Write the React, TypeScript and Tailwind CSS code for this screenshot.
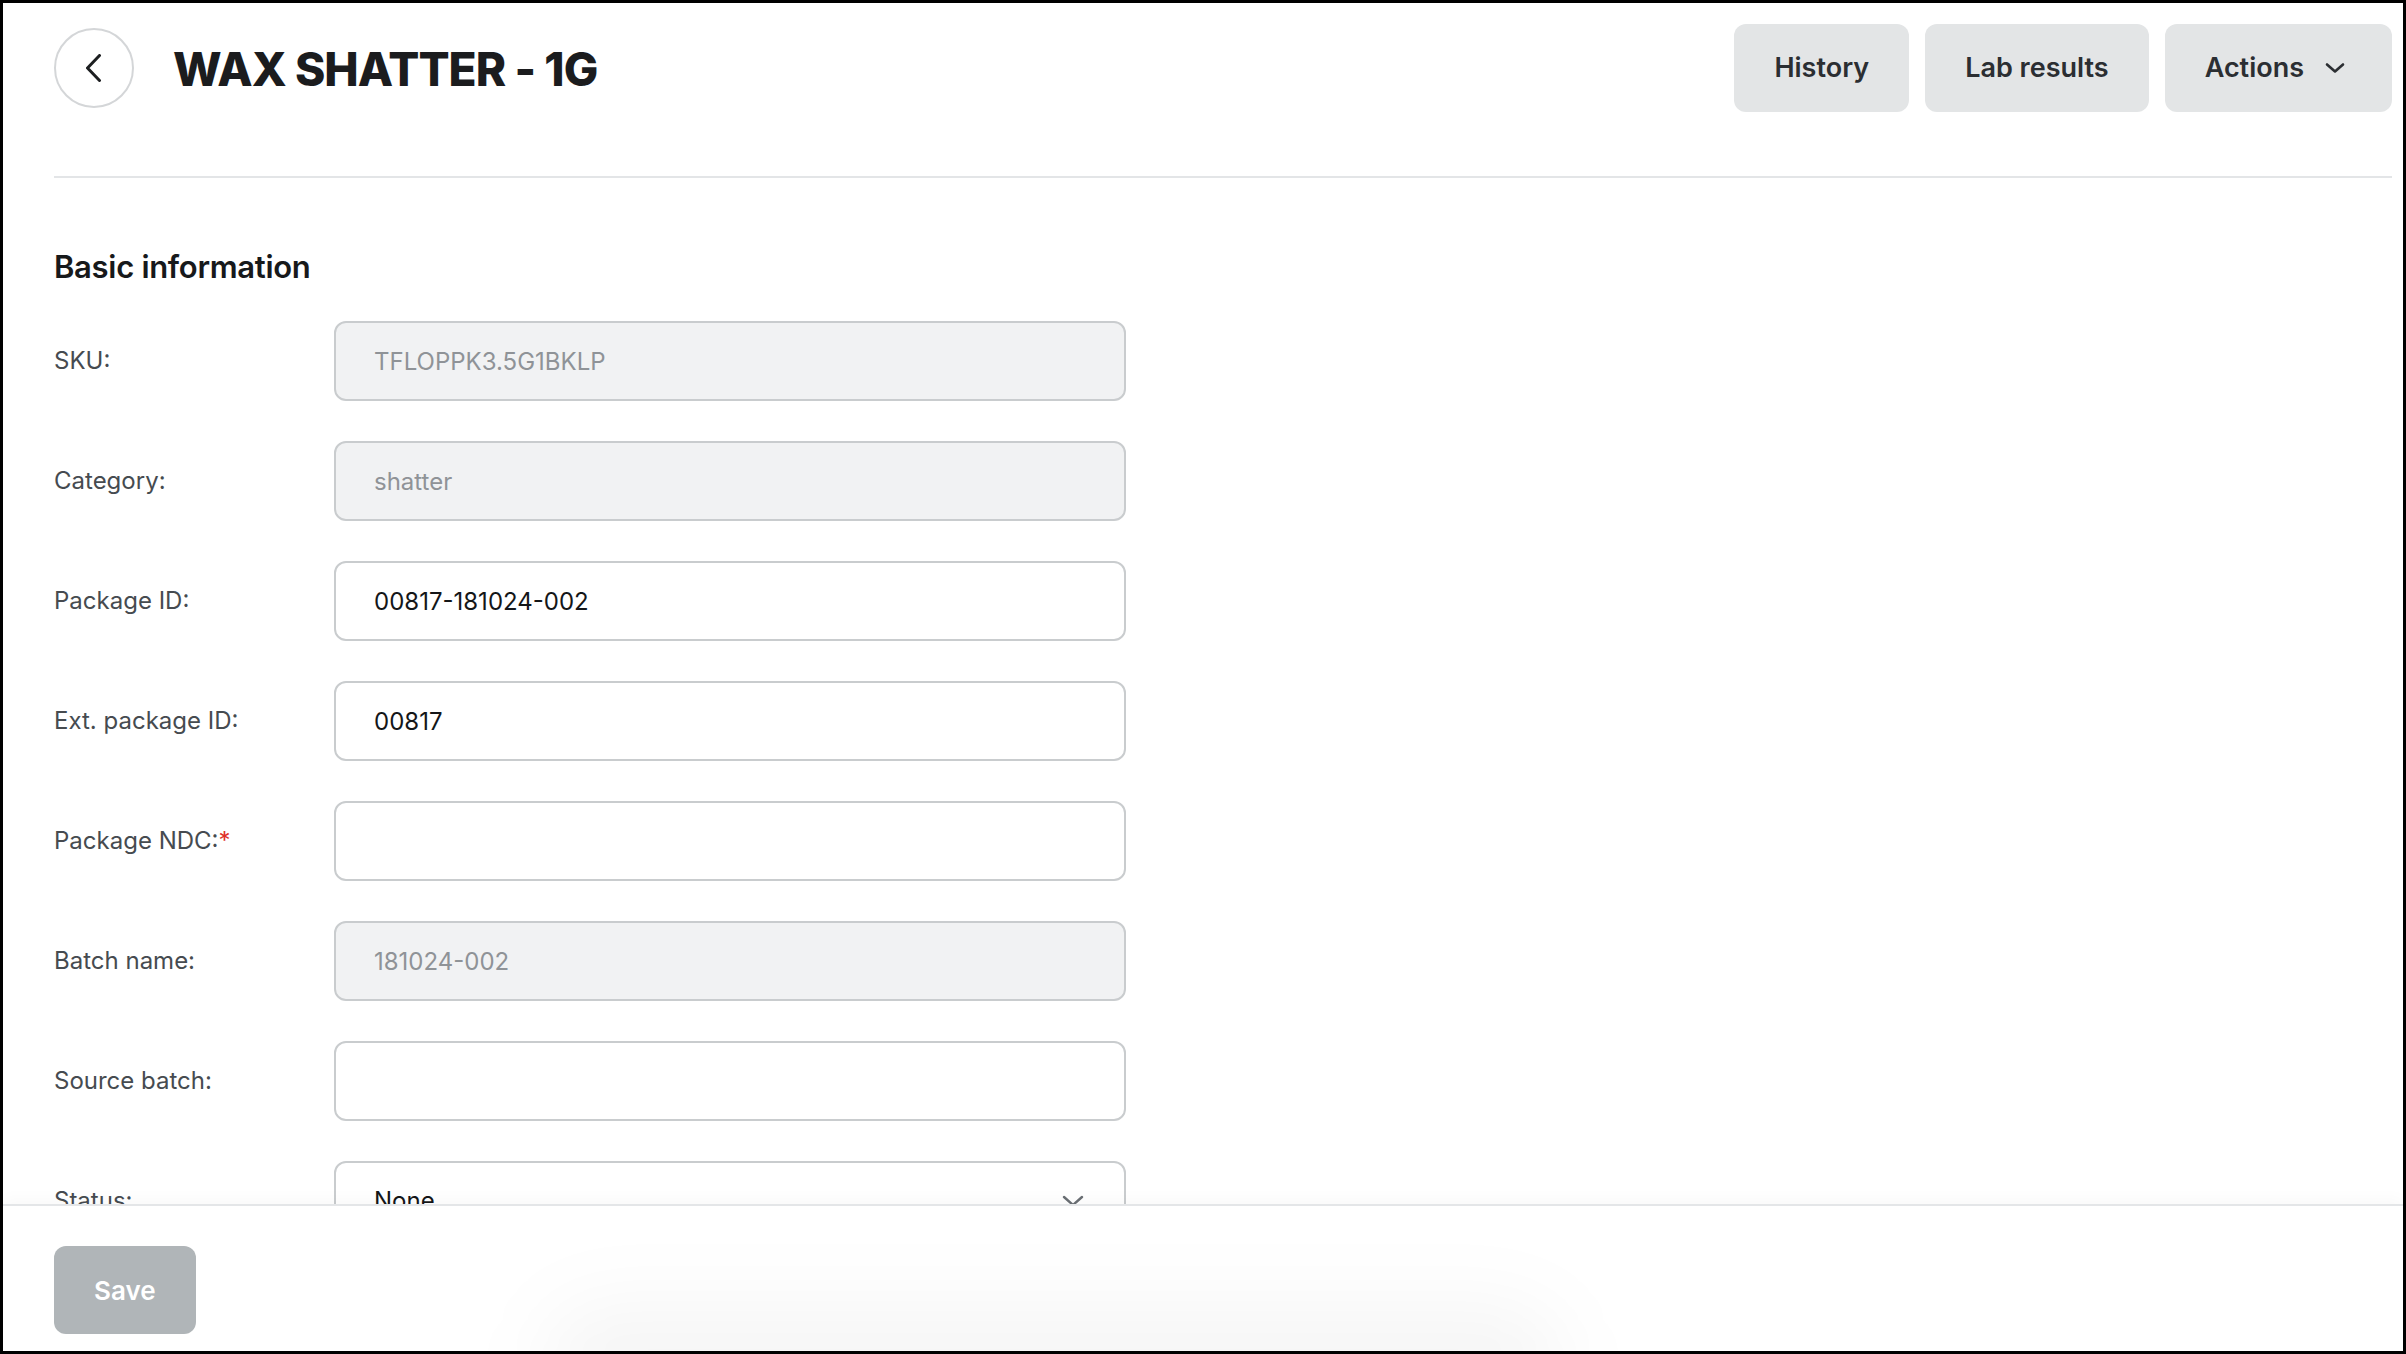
import React from "react";

type Row = {
  label: string;
  value: string;
  disabled?: boolean;
  required?: boolean;
};

const rows: Row[] = [
  { label: "SKU:", value: "TFLOPPK3.5G1BKLP", disabled: true },
  { label: "Category:", value: "shatter", disabled: true },
  { label: "Package ID:", value: "00817-181024-002" },
  { label: "Ext. package ID:", value: "00817" },
  { label: "Package NDC:", value: "", required: true },
  { label: "Batch name:", value: "181024-002", disabled: true },
  { label: "Source batch:", value: "" },
];

function TextInput({ value, disabled }: { value: string; disabled?: boolean }) {
  return (
    <input
      readOnly
      value={value}
      className={
        disabled
          ? "w-[792px] h-[80px] rounded-[12px] border-2 border-[#c9ccce] bg-[#f1f2f3] px-[38px] text-[24px] text-[#8f9397] outline-none font-['Inter',sans-serif]"
          : "w-[792px] h-[80px] rounded-[12px] border-2 border-[#c9ccce] bg-white px-[38px] text-[24px] text-[#141618] outline-none font-['Inter',sans-serif]"
      }
    />
  );
}

export default function App() {
  return (
    <div className="relative h-screen w-full overflow-hidden border-[3px] border-black bg-white font-['Inter',sans-serif] flex flex-col">
      <header className="shrink-0 pl-[51px] pr-[11px] pt-[21px]">
        <div className="flex h-[88px] items-center justify-between">
          <div className="flex items-center gap-[39px]">
            <button className="flex h-[80px] w-[80px] items-center justify-center rounded-full border-2 border-[#d4d6d8] bg-white">
              <svg width="16" height="28" viewBox="0 0 16 28" fill="none">
                <polyline
                  points="13.5,1.5 1.5,14 13.5,26.5"
                  stroke="#1d1f21"
                  strokeWidth="3"
                  strokeLinecap="round"
                  strokeLinejoin="round"
                />
              </svg>
            </button>
            <h1 className="text-[46px] font-extrabold tracking-[-0.02em] text-[#1b1c1e] leading-none pt-[2px]">
              WAX SHATTER - 1G
            </h1>
          </div>
          <div className="flex items-center gap-[16px]">
            <button className="h-[88px] rounded-[12px] bg-[#e3e5e6] px-[40px] text-[27px] font-semibold text-[#2b2e32]">
              History
            </button>
            <button className="h-[88px] rounded-[12px] bg-[#e3e5e6] px-[40px] text-[27px] font-semibold text-[#2b2e32]">
              Lab results
            </button>
            <button className="flex h-[88px] items-center rounded-[12px] bg-[#e3e5e6] pl-[40px] pr-[47px] text-[27px] font-semibold text-[#2b2e32]">
              <span>Actions</span>
              <svg className="ml-[21px]" width="20" height="12" viewBox="0 0 20 12" fill="none">
                <polyline
                  points="2,2.5 10,9.5 18,2.5"
                  stroke="#2b2e32"
                  strokeWidth="2.6"
                  strokeLinecap="round"
                  strokeLinejoin="round"
                />
              </svg>
            </button>
          </div>
        </div>
        <div className="mt-[64px] h-[2px] bg-[#e3e5e7]" />
      </header>

      <main className="min-h-0 flex-1 overflow-hidden pl-[51px] pt-[72px]">
        <h2 className="text-[31px] font-semibold leading-[34px] tracking-[-0.01em] text-[#17191b]">
          Basic information
        </h2>
        <div className="mt-[37px] flex flex-col gap-[40px]">
          {rows.map((r) => (
            <div key={r.label} className="flex items-center">
              <label className="w-[280px] shrink-0 text-[24px] text-[#464b50]">
                {r.label}
                {r.required && <span className="text-[#e0302a]">*</span>}
              </label>
              <TextInput value={r.value} disabled={r.disabled} />
            </div>
          ))}
          <div className="flex items-center">
            <label className="w-[280px] shrink-0 text-[24px] text-[#464b50]">Status:</label>
            <div className="flex h-[80px] w-[792px] items-center justify-between rounded-[12px] border-2 border-[#c9ccce] bg-white pl-[38px] pr-[40px]">
              <span className="text-[24px] text-[#141618]">None</span>
              <svg width="22" height="12" viewBox="0 0 22 12" fill="none">
                <polyline
                  points="2,2 11,10 20,2"
                  stroke="#6a6f74"
                  strokeWidth="2.4"
                  strokeLinecap="round"
                  strokeLinejoin="round"
                />
              </svg>
            </div>
          </div>
        </div>
      </main>

      <footer className="relative z-10 shrink-0 border-t-2 border-[#e4e6e8] bg-white pl-[51px] pt-[40px] pb-[17px] shadow-[0_-6px_14px_rgba(0,0,0,0.025)]">
        <button className="h-[88px] rounded-[12px] bg-[#b0b5b8] px-[40px] text-[26px] font-semibold text-white">
          Save
        </button>
      </footer>

      <div className="pointer-events-none absolute bottom-[-75px] left-[540px] z-20 h-[120px] w-[1020px] rounded-full bg-black/[0.04] blur-2xl" />
    </div>
  );
}
